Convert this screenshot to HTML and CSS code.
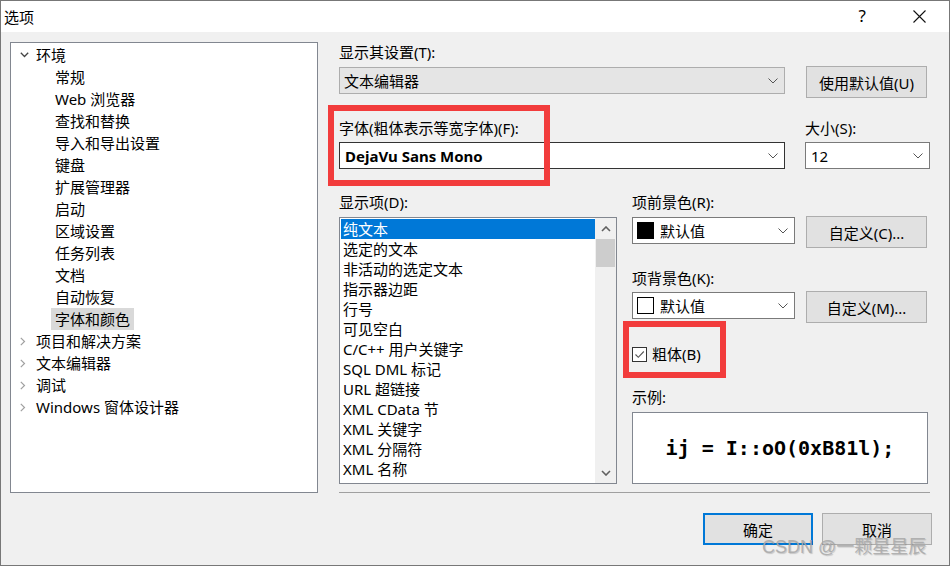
FILE: index.html
```html
<!doctype html>
<html>
<head>
<meta charset="UTF-8">
<meta name="viewport" content="width=device-width,initial-scale=1">
<title>选项</title>
<link rel="stylesheet" href="styles.css">
</head>
<body>
<div class="window">
	<div class="titlebar">
		<span class="title">选项</span>
		<span class="help">?</span>
		<span class="close">
			<svg width="13" height="13" viewBox="0 0 13 13"><path d="M0.5 0.5L12.5 12.5M12.5 0.5L0.5 12.5" stroke="#111" stroke-width="1.1" fill="none"/></svg>
		</span>
	</div>

	<div class="body">
		<div class="main">
			<!-- 왼쪽 트리 -->
			<ul class="tree">
				<li class="node"><span class="tw"><svg width="9" height="6" viewBox="0 0 9 6"><path d="M0.8 0.8L4.5 4.5L8.2 0.8" fill="none" stroke="#444" stroke-width="1.3"/></svg></span>环境</li>
				<li class="leaf">常规</li>
				<li class="leaf">Web 浏览器</li>
				<li class="leaf">查找和替换</li>
				<li class="leaf">导入和导出设置</li>
				<li class="leaf">键盘</li>
				<li class="leaf">扩展管理器</li>
				<li class="leaf">启动</li>
				<li class="leaf">区域设置</li>
				<li class="leaf">任务列表</li>
				<li class="leaf">文档</li>
				<li class="leaf">自动恢复</li>
				<li class="leaf"><span class="sel">字体和颜色</span></li>
				<li class="node"><span class="tw"><svg width="6" height="9" viewBox="0 0 6 9"><path d="M0.8 0.8L4.5 4.5L0.8 8.2" fill="none" stroke="#a0a0a0" stroke-width="1.2"/></svg></span>项目和解决方案</li>
				<li class="node"><span class="tw"><svg width="6" height="9" viewBox="0 0 6 9"><path d="M0.8 0.8L4.5 4.5L0.8 8.2" fill="none" stroke="#a0a0a0" stroke-width="1.2"/></svg></span>文本编辑器</li>
				<li class="node"><span class="tw"><svg width="6" height="9" viewBox="0 0 6 9"><path d="M0.8 0.8L4.5 4.5L0.8 8.2" fill="none" stroke="#a0a0a0" stroke-width="1.2"/></svg></span>调试</li>
				<li class="node"><span class="tw"><svg width="6" height="9" viewBox="0 0 6 9"><path d="M0.8 0.8L4.5 4.5L0.8 8.2" fill="none" stroke="#a0a0a0" stroke-width="1.2"/></svg></span>Windows 窗体设计器</li>
			</ul>

			<!-- 오른쪽 설정 -->
			<div class="panel">
				<label class="lbl">显示其设置(T):</label>
				<div class="row row_top">
					<div class="combo combo_ro w_wide">
						<span class="val">文本编辑器</span>
						<svg class="chev" width="10" height="6" viewBox="0 0 10 6"><path d="M0.5 0.5L5 5L9.5 0.5" fill="none" stroke="#555"/></svg>
					</div>
					<button type="button" class="btn">使用默认值(U)</button>
				</div>

				<div class="row row_font">
					<div class="col w_wide">
						<label class="lbl">字体(粗体表示等宽字体)(F):</label>
						<div class="combo combo_focus">
							<span class="val font_name">DejaVu Sans Mono</span>
							<svg class="chev" width="10" height="6" viewBox="0 0 10 6"><path d="M0.5 0.5L5 5L9.5 0.5" fill="none" stroke="#555"/></svg>
						</div>
					</div>
					<div class="col w_size">
						<label class="lbl">大小(S):</label>
						<div class="combo">
							<span class="val size_val">12</span>
							<svg class="chev" width="10" height="6" viewBox="0 0 10 6"><path d="M0.5 0.5L5 5L9.5 0.5" fill="none" stroke="#555"/></svg>
						</div>
					</div>
				</div>

				<div class="row row_items">
					<div class="col w_list">
						<label class="lbl">显示项(D):</label>
						<div class="listbox">
							<ul class="items">
								<li class="on">纯文本</li>
								<li>选定的文本</li>
								<li>非活动的选定文本</li>
								<li>指示器边距</li>
								<li>行号</li>
								<li>可见空白</li>
								<li>C/C++ 用户关键字</li>
								<li>SQL DML 标记</li>
								<li>URL 超链接</li>
								<li>XML CData 节</li>
								<li>XML 关键字</li>
								<li>XML 分隔符</li>
								<li>XML 名称</li>
							</ul>
							<div class="scroll">
								<span class="arrow"><svg width="10" height="6" viewBox="0 0 10 6"><path d="M1 5L5 1L9 5" fill="none" stroke="#606060" stroke-width="1.6"/></svg></span>
								<span class="thumb"></span>
								<span class="track"></span>
								<span class="arrow"><svg width="10" height="6" viewBox="0 0 10 6"><path d="M1 1L5 5L9 1" fill="none" stroke="#606060" stroke-width="1.6"/></svg></span>
							</div>
						</div>
					</div>

					<div class="col w_color">
						<label class="lbl">项前景色(R):</label>
						<div class="row row_color">
							<div class="combo w_cbox">
								<span class="swatch black"></span>
								<span class="val">默认值</span>
								<svg class="chev" width="10" height="6" viewBox="0 0 10 6"><path d="M0.5 0.5L5 5L9.5 0.5" fill="none" stroke="#555"/></svg>
							</div>
							<button type="button" class="btn">自定义(C)...</button>
						</div>

						<label class="lbl lbl_bg">项背景色(K):</label>
						<div class="row row_color row_color2">
							<div class="combo w_cbox">
								<span class="swatch"></span>
								<span class="val">默认值</span>
								<svg class="chev" width="10" height="6" viewBox="0 0 10 6"><path d="M0.5 0.5L5 5L9.5 0.5" fill="none" stroke="#555"/></svg>
							</div>
							<button type="button" class="btn">自定义(M)...</button>
						</div>

						<div class="check_row">
							<span class="checkbox"><svg width="13" height="13" viewBox="0 0 13 13"><path d="M2.5 6.5L5.3 9.3L10.8 3.5" fill="none" stroke="#555" stroke-width="1.1"/></svg></span>
							<span>粗体(B)</span>
						</div>

						<label class="lbl lbl_sample">示例:</label>
						<div class="sample">ij = I::oO(0xB81l);</div>
					</div>
				</div>

				<div class="sep"></div>
			</div>
		</div>

		<div class="footer">
			<button type="button" class="btn btn_foot btn_default">确定</button>
			<button type="button" class="btn btn_foot">取消</button>
		</div>
	</div>

	<!-- 빨간 표시 -->
	<span class="mark mark_font"></span>
	<span class="mark mark_bold"></span>
	<span class="watermark">CSDN @一颗星星辰</span>
</div>
</body>
</html>
```

FILE: styles.css
```css
* {
	box-sizing: border-box;
}
body {
	margin: 0;
	font-family: "Noto Sans", "Noto Sans CJK SC", sans-serif;
	font-size: 15px;
	color: #000;
}
ul {
	list-style: none;
	margin: 0;
	padding: 0;
}
.window {
	position: relative;
	width: 950px;
	height: 566px;
	border: 1px solid #777;
	background: #f0f0f0;
	overflow: hidden;
}

/* 제목 표시줄 */
.titlebar {
	display: flex;
	align-items: center;
	height: 31px;
	padding-left: 3px;
	background: #fff;
}
.title {
	line-height: 20px;
}
.help {
	margin-left: auto;
	font-size: 17px;
	line-height: 20px;
	margin-top: -2px;
}
.close {
	display: flex;
	margin-left: 47px;
	margin-right: 23px;
	margin-top: -1px;
}

.body {
	padding: 10px 0 0 9px;
}
.main {
	display: flex;
}

/* 트리 */
.tree {
	width: 308px;
	height: 451px;
	padding-top: 1px;
	border: 1px solid #828790;
	background: #fff;
}
.tree li {
	height: 22px;
	line-height: 22px;
	white-space: nowrap;
}
.tree .node {
	display: flex;
	align-items: center;
}
.tw {
	display: flex;
	align-items: center;
	width: 25px;
	padding-left: 9px;
}
.tree .leaf {
	padding-left: 44px;
}
.tree .sel {
	display: inline-block;
	height: 22px;
	margin-left: -4px;
	padding: 0 4px;
	background: #d9d9d9;
}

/* 오른쪽 */
.panel {
	width: 592px;
	margin-left: 21px;
}
.lbl {
	display: block;
	height: 20px;
	line-height: 20px;
	white-space: nowrap;
}
.row {
	display: flex;
	align-items: flex-start;
}
.col {
	display: flex;
	flex-direction: column;
}
.row_top {
	gap: 21px;
	margin-top: 4px;
}
.row_top .combo {
	margin-top: 1px;
}
.row_font {
	gap: 20px;
	margin-top: 20px;
}
.row_font .combo {
	margin-top: 4px;
}
.row_items {
	gap: 15px;
	margin-top: 23px;
}
.w_wide {
	width: 446px;
}
.w_size {
	width: 125px;
}
.w_list {
	width: 278px;
}
.w_color {
	width: 298px;
}
.w_cbox {
	width: 163px;
}

.combo {
	display: flex;
	align-items: center;
	height: 27px;
	padding: 0 6px 0 4px;
	border: 1px solid #7a7a7a;
	background: #fff;
	white-space: nowrap;
}
.combo .val {
	flex: 1;
}
.combo_ro {
	background: #e5e5e5;
	border-color: #adadad;
}
.combo_focus {
	border-color: #333;
}
.font_name {
	font-weight: bold;
	padding-left: 1px;
}
.size_val {
	padding-left: 1px;
}
.chev {
	flex: none;
	margin-top: 1px;
}

.btn {
	height: 32px;
	width: 121px;
	padding: 0;
	border: 1px solid #adadad;
	background: #e1e1e1;
	font-family: inherit;
	font-size: 15px;
	color: #000;
}

/* 목록 */
.listbox {
	display: flex;
	height: 267px;
	margin-top: 5px;
	padding: 0 0 0 1px;
	border: 1px solid #828790;
	background: #fff;
}
.items {
	flex: 1;
	padding-top: 1px;
}
.items li {
	height: 20px;
	line-height: 20px;
	padding-left: 2px;
	white-space: nowrap;
}
.items li.on {
	background: #0078d7;
	color: #fff;
}
.scroll {
	display: flex;
	flex-direction: column;
	width: 21px;
	background: #f0f0f0;
}
.arrow {
	display: flex;
	align-items: center;
	justify-content: center;
	height: 21px;
}
.thumb {
	height: 28px;
	margin: 0 1px;
	background: #cdcdcd;
}
.track {
	flex: 1;
}

/* 색상 */
.row_color {
	gap: 11px;
	margin-top: 4px;
}
.row_color .combo {
	margin-top: 1px;
	padding-left: 4px;
}
.row_color2 {
	margin-top: 3px;
}
.lbl_bg {
	margin-top: 20px;
}
.swatch {
	flex: none;
	width: 17px;
	height: 17px;
	margin-right: 6px;
	border: 1px solid #000;
	background: #fff;
}
.swatch.black {
	background: #000;
}
.check_row {
	display: flex;
	align-items: center;
	height: 20px;
	margin-top: 21px;
	gap: 5px;
	line-height: 20px;
}
.checkbox {
	display: flex;
	align-items: center;
	justify-content: center;
	width: 15px;
	height: 15px;
	border: 1px solid #333;
	background: #fff;
}
.lbl_sample {
	margin-top: 23px;
}
.sample {
	display: flex;
	align-items: center;
	justify-content: center;
	width: 296px;
	height: 72px;
	margin-top: 5px;
	border: 1px solid #828790;
	background: #fff;
	font-family: "DejaVu Sans Mono", monospace;
	font-weight: bold;
	font-size: 20px;
	white-space: pre;
}
.sep {
	width: 591px;
	margin-top: 8px;
	border-top: 1px solid #a0a0a0;
}

/* 하단 버튼 */
.footer {
	display: flex;
	justify-content: flex-end;
	gap: 9px;
	margin-top: 20px;
	padding-right: 17px;
}
.btn_foot {
	width: 110px;
}
.btn_default {
	border: 2px solid #0078d7;
}

/* 표시 */
.mark {
	position: absolute;
	border: 6px solid #f23c3c;
}
.mark_font {
	left: 327px;
	top: 104px;
	width: 222px;
	height: 81px;
}
.mark_bold {
	left: 622px;
	top: 320px;
	width: 103px;
	height: 57px;
}
.watermark {
	position: absolute;
	left: 761px;
	top: 534px;
	font-family: "Liberation Sans", "Noto Sans CJK SC", sans-serif;
	font-size: 18px;
	line-height: 24px;
	color: rgba(170, 170, 170, 0.9);
	text-shadow: 1px 1px 1px rgba(0, 0, 0, 0.18);
	white-space: nowrap;
}
```
